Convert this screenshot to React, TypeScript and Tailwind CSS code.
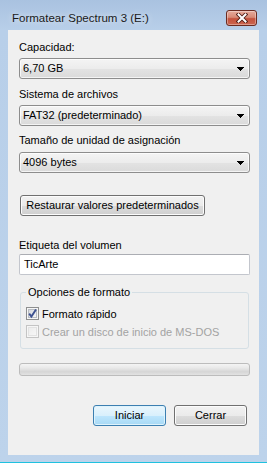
import React from 'react';

function Arrow() {
  return (
    <svg width="7" height="4" viewBox="0 0 7 4" shapeRendering="crispEdges">
      <rect x="0" y="0" width="7" height="1" fill="#000" />
      <rect x="1" y="1" width="5" height="1" fill="#000" />
      <rect x="2" y="2" width="3" height="1" fill="#000" />
      <rect x="3" y="3" width="1" height="1" fill="#000" />
    </svg>
  );
}

function Label({ children, className = '' }: { children: React.ReactNode; className?: string }) {
  return <div className={`h-[15px] leading-[15px] ${className}`}>{children}</div>;
}

function Combo({ value }: { value: string }) {
  return (
    <div className="flex h-[21px] w-[231px] items-center justify-between rounded-[3px] border border-[#8d8d8d] bg-[linear-gradient(to_bottom,#f4f4f4_0%,#ececec_50%,#e3e3e3_51%,#dadada_100%)] pl-[3px] pr-[5px] shadow-[inset_0_0_0_1px_rgba(255,255,255,0.7)]">
      <span className="leading-[15px]">{value}</span>
      <Arrow />
    </div>
  );
}

function Checkbox({ checked = false, disabled = false }: { checked?: boolean; disabled?: boolean }) {
  const id = checked ? 'cbA' : 'cbB';
  return (
    <svg width="13" height="13" viewBox="0 0 13 13" className="shrink-0">
      <defs>
        <linearGradient id={id} x1="0" y1="0" x2="1" y2="1">
          <stop offset="0" stopColor={disabled ? '#ececec' : '#d4d7dc'} />
          <stop offset="1" stopColor={disabled ? '#f7f7f7' : '#f8f8f8'} />
        </linearGradient>
      </defs>
      <rect x="0.5" y="0.5" width="12" height="12" fill="#f6f6f6" stroke={disabled ? '#c4c4c4' : '#8e8f8f'} />
      <rect x="2.5" y="2.5" width="8" height="8" fill={`url(#${id})`} stroke={disabled ? '#e2e2e2' : '#b9bdc3'} />
      {checked && (
        <path d="M3.2 6.6 L5.4 9.6 L10 2.6" fill="none" stroke="#3d5190" strokeWidth="1.9" />
      )}
    </svg>
  );
}

function CloseButton() {
  return (
    <div className="flex h-[16px] w-[31px] items-center justify-center rounded-[3px] border border-[#6b2b20] bg-[linear-gradient(to_bottom,#e6ab9c_0%,#d88a76_45%,#c4523c_55%,#cb6650_100%)] shadow-[inset_0_0_0_1px_rgba(255,255,255,0.35)]">
      <svg width="12" height="10" viewBox="0 0 12 10">
        <path d="M2.5 1.5 L9.5 8.5 M9.5 1.5 L2.5 8.5" stroke="#4e1d15" strokeWidth="3.8" strokeLinecap="square" />
        <path d="M2.5 1.5 L9.5 8.5 M9.5 1.5 L2.5 8.5" stroke="#ffffff" strokeWidth="2" strokeLinecap="square" />
      </svg>
    </div>
  );
}

export default function App() {
  return (
    <div className="flex h-[463px] w-[267px] flex-col overflow-hidden bg-[linear-gradient(to_bottom,#a9c2e0_0px,#b8cfe9_30px,#bdd3eb_100%)] font-['Liberation_Sans',Arial,sans-serif] text-[11px] text-black">
      {/* Title bar */}
      <div className="flex h-[30px] shrink-0 items-start justify-between pl-[12px] pr-[10px] pt-[10px]">
        <span className="mt-[1px] text-[11.5px] leading-[15px] text-[#1a1a1a] [text-shadow:0_0_6px_rgba(255,255,255,0.8)]">
          Formatear Spectrum 3 (E:)
        </span>
        <CloseButton />
      </div>

      {/* Client area */}
      <div className="mx-[8px] flex h-[425px] shrink-0 flex-col bg-[#f0f0f0] pl-[11px] pt-[10px]">
        <Label>Capacidad:</Label>
        <div className="mt-[3px]">
          <Combo value="6,70 GB" />
        </div>

        <Label className="mt-[8px]">Sistema de archivos</Label>
        <div className="mt-[3px]">
          <Combo value="FAT32 (predeterminado)" />
        </div>

        <Label className="mt-[7px]">Tamaño de unidad de asignación</Label>
        <div className="mt-[4px]">
          <Combo value="4096 bytes" />
        </div>

        <div className="ml-[1px] mt-[22px] flex h-[21px] w-[185px] items-center justify-center rounded-[3px] border border-[#707070] bg-[linear-gradient(to_bottom,#f2f2f2_0%,#ebebeb_50%,#dddddd_51%,#cfcfcf_100%)] leading-[15px] shadow-[inset_0_0_0_1px_#fcfcfc]">
          Restaurar valores predeterminados
        </div>

        <Label className="mt-[22px]">Etiqueta del volumen</Label>
        <div className="mt-[1px] flex h-[21px] w-[231px] items-center rounded-[2px] border border-[#c3c6cd] border-t-[#abadb3] bg-white pl-[4px] leading-[15px]">
          TicArte
        </div>

        {/* Opciones de formato */}
        <div className="relative ml-[1px] mt-[17px] h-[57px] w-[229px] rounded-[3px] border border-[#d5dfe5] pl-[5px] pt-[14px]">
          <span className="absolute left-[5px] top-[-8px] bg-[#f0f0f0] px-[2px] leading-[15px]">
            Opciones de formato
          </span>
          <div className="flex items-start gap-[3px] leading-[15px]">
            <Checkbox checked />
            <span>Formato rápido</span>
          </div>
          <div className="mt-[3px] flex items-start gap-[3px] leading-[15px] text-[#a3a3a3]">
            <Checkbox disabled />
            <span>Crear un disco de inicio de MS-DOS</span>
          </div>
        </div>

        {/* Progress bar */}
        <div className="mt-[14px] h-[13px] w-[231px] rounded-[3px] border border-[#bcbcbc] bg-[linear-gradient(to_bottom,#f4f4f4_0%,#e9e9e9_35%,#d6d6d6_70%,#e2e2e2_100%)]" />

        {/* Buttons */}
        <div className="mt-[29px] flex justify-end gap-[8px] pr-[12px]">
          <div className="flex h-[21px] w-[73px] items-center justify-center rounded-[3px] border border-[#3c7fb1] bg-[linear-gradient(to_bottom,#eaf6fd_0%,#d9f0fc_50%,#bee6fd_51%,#a7d9f5_100%)] leading-[15px] shadow-[inset_0_0_0_1px_#def3fc]">
            Iniciar
          </div>
          <div className="flex h-[21px] w-[73px] items-center justify-center rounded-[3px] border border-[#707070] bg-[linear-gradient(to_bottom,#f2f2f2_0%,#ebebeb_50%,#dddddd_51%,#cfcfcf_100%)] leading-[15px] shadow-[inset_0_0_0_1px_#fcfcfc]">
            Cerrar
          </div>
        </div>
      </div>

      <div className="h-[7px] shrink-0" />
      <div className="h-[1px] shrink-0 bg-[#1fc1df]" />
    </div>
  );
}
